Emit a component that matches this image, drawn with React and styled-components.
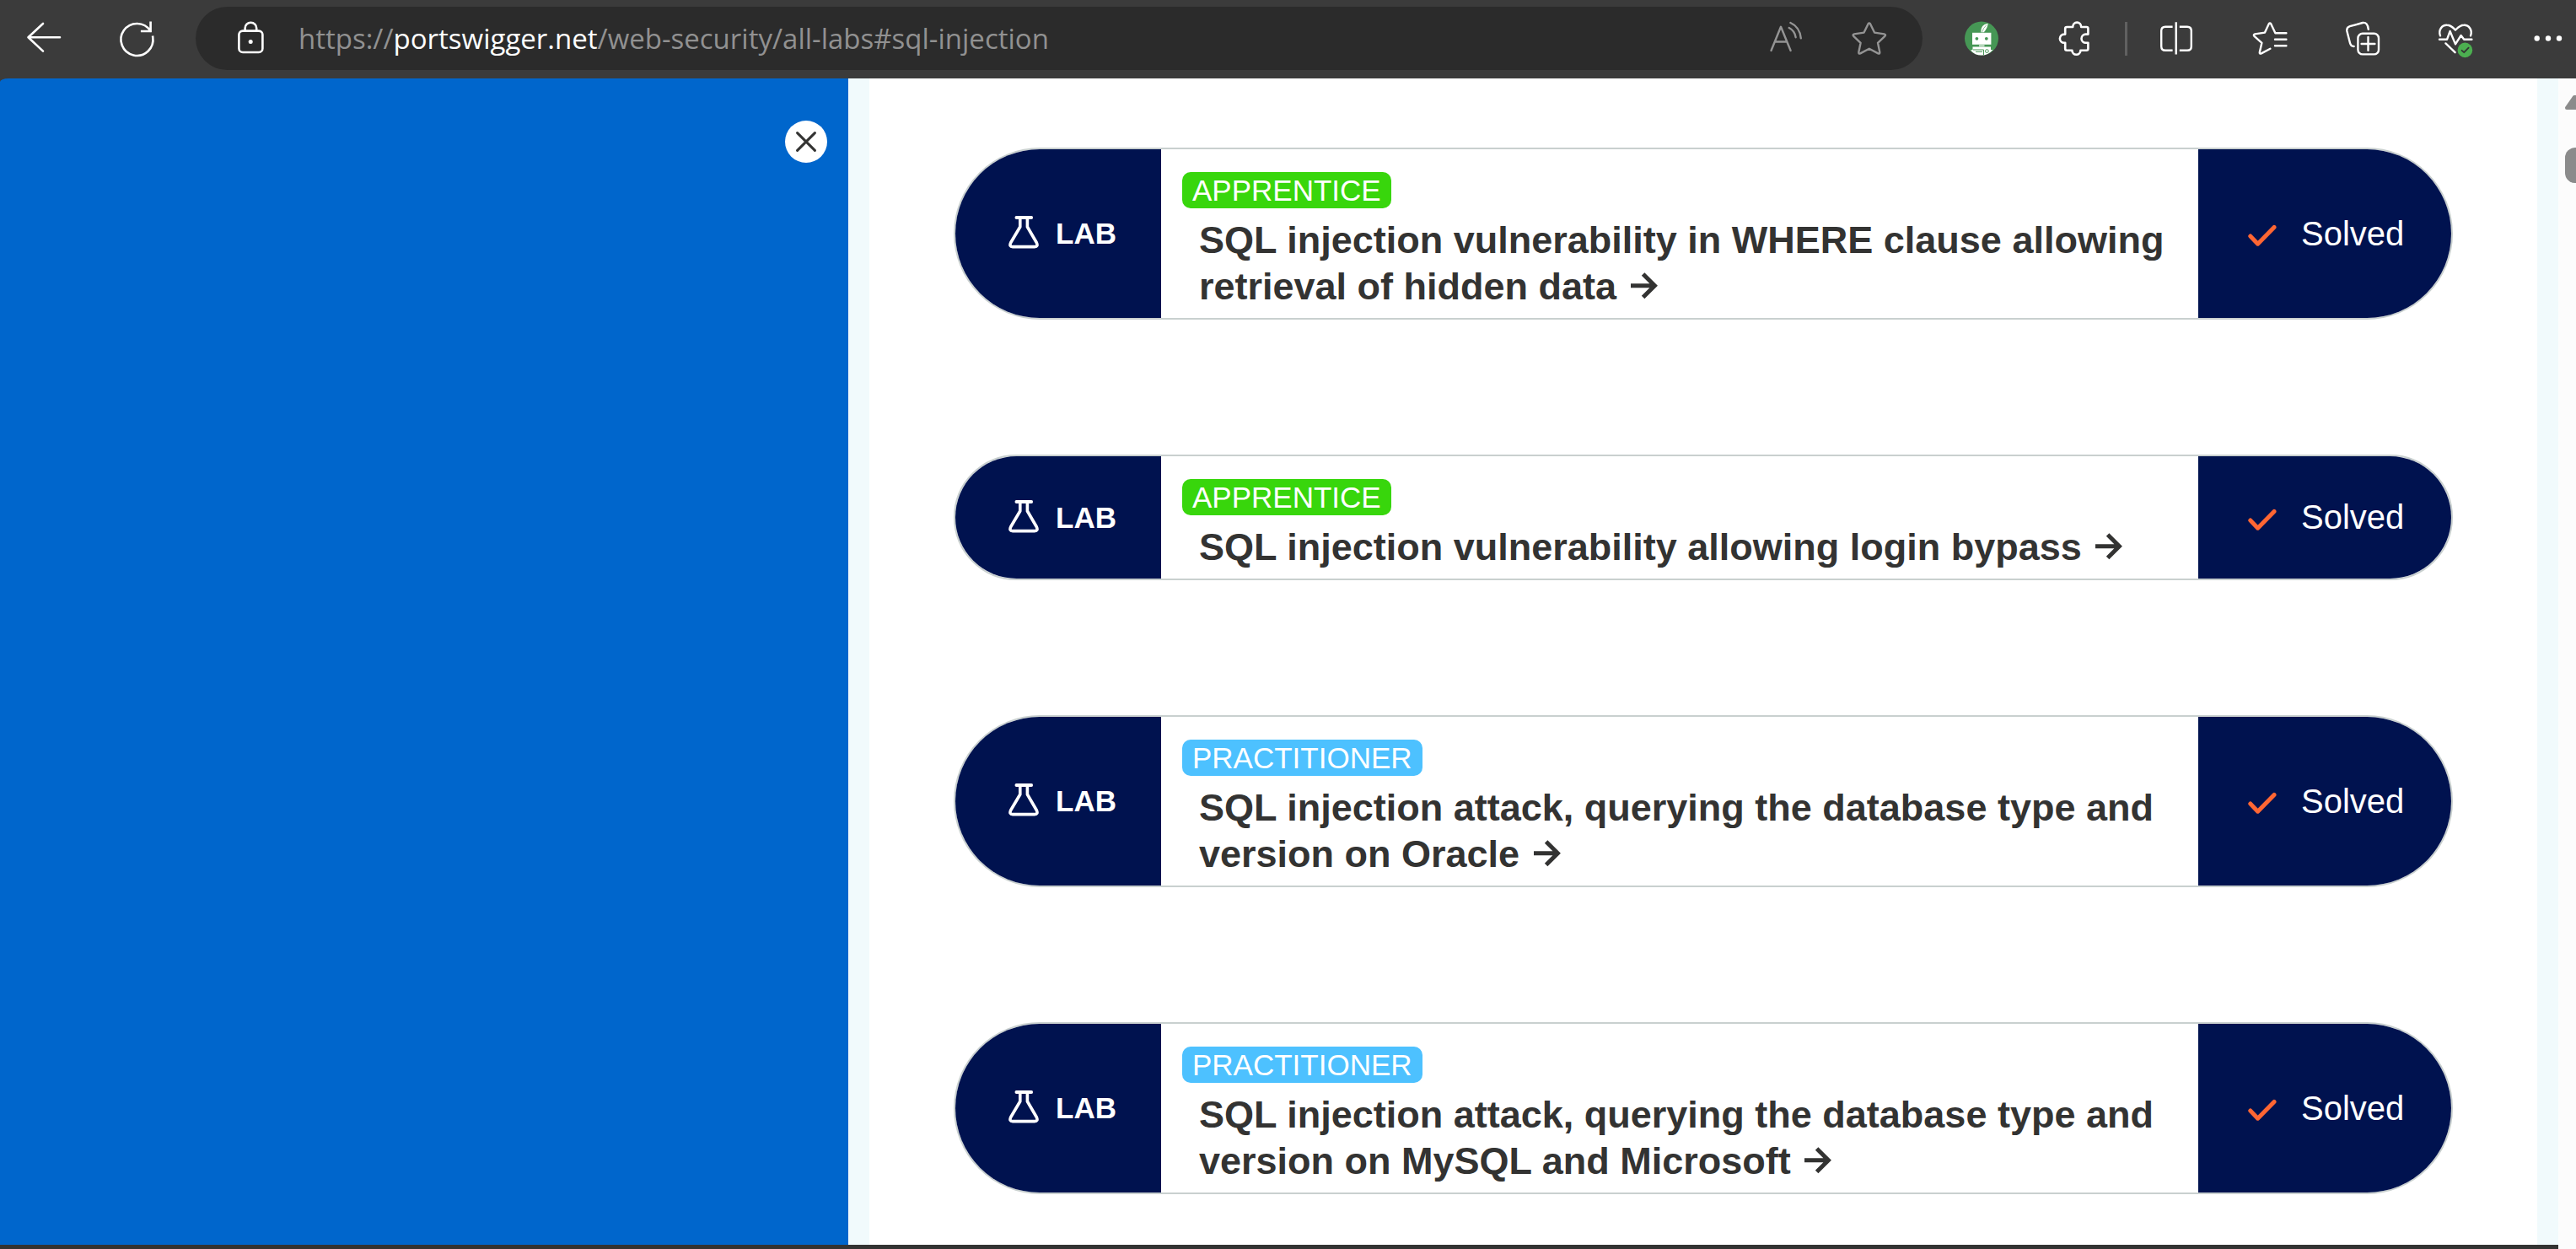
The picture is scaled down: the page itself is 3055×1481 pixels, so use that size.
import React from "react";
import styled, { createGlobalStyle } from "styled-components";

const GlobalStyle = createGlobalStyle`
  *, *::before, *::after { box-sizing: border-box; }
  body { margin: 0; background: #3b3b3b; font-family: "Liberation Sans", Arial, sans-serif; }
  button { border: 0; padding: 0; background: none; color: inherit; font: inherit; }
`;

const Page = styled.div`
  display: flex;
  flex-direction: column;
  height: 100vh;
  overflow: hidden;
`;

/* ---------- browser toolbar ---------- */

const Toolbar = styled.header`
  display: flex;
  align-items: center;
  flex: none;
  height: 93px;
  padding: 8px 12px 9px 31px;
  color: #fff;
  background: #3b3b3b;
`;

const ToolGroup = styled.div`
  display: flex;
  align-items: center;
  gap: ${(p) => p.$gap}px;
`;

const IconButton = styled.button`
  display: block;
  flex: none;
  width: 42px;
  height: 42px;
  svg { display: block; overflow: visible; }
`;

const AddressBar = styled.div`
  display: flex;
  align-items: center;
  align-self: flex-start;
  flex: 1;
  min-width: 0;
  height: 75px;
  margin: 0 49px;
  padding: 0 42px 0 44px;
  border-radius: 38px;
  background: #2b2b2b;
`;

const Address = styled.div`
  flex: 1;
  min-width: 0;
  margin-left: 36px;
  color: #919191;
  font: 33px/48px "Open Sans", "Noto Sans", sans-serif;
  white-space: nowrap;
  overflow: hidden;
`;

const Host = styled.span`
  color: #fff;
`;

const Muted = styled(ToolGroup)`
  color: #949494;
`;

const Divider = styled.span`
  width: 3px;
  height: 40px;
  margin: 0 38px 0 39px;
  background: #606060;
`;

/* ---------- page body ---------- */

const Viewport = styled.div`
  display: flex;
  flex: 1;
  min-height: 0;
`;

const Document = styled.div`
  display: flex;
  flex-direction: column;
  flex: 1;
  min-width: 0;
  overflow: hidden;
`;

const Columns = styled.div`
  display: flex;
  flex: 1;
  min-height: 0;
  overflow: hidden;
`;

const Sidebar = styled.aside`
  flex: 0 0 1006px;
  display: flex;
  justify-content: flex-end;
  align-items: flex-start;
  padding: 50px 25px;
  border-top-left-radius: 10px 4px;
  background: #0066cc;
`;

const CloseButton = styled.button`
  display: grid;
  place-items: center;
  width: 50px;
  height: 50px;
  border-radius: 50%;
  background: #fff;
  color: #333332;
`;

const Backdrop = styled.div`
  flex: 1;
  min-width: 0;
  padding: 0 25px;
  background: #f1fafc;
`;

const LabList = styled.main`
  display: flex;
  flex-direction: column;
  gap: 160px;
  min-height: 100%;
  padding: 82px 100px 60px;
  background: #fff;
`;

const FooterEdge = styled.footer`
  flex: none;
  height: 5px;
  background: #333332;
`;

const Scrollbar = styled.div`
  flex: 0 0 21px;
  display: flex;
  flex-direction: column;
  align-items: flex-start;
  gap: 45px;
  padding: 20px 0 0 8px;
  overflow: hidden;
  background: #fcfcfc;
  svg { display: block; flex: none; }
`;

const Thumb = styled.div`
  flex: none;
  width: 24px;
  height: 42px;
  border-radius: 12px;
  background: #8b8b8b;
`;

/* ---------- lab card ---------- */

const Card = styled.article`
  display: grid;
  grid-template-columns: 244px 1fr 300px;
  overflow: hidden;
  border: 2px solid #c9d0cf;
  border-radius: 102px;
  background: #fff;
`;

const KindPanel = styled.div`
  display: flex;
  align-items: center;
  gap: 20px;
  padding-left: 63px;
  color: #fff;
  background: #00124f;
  font-size: 35px;
  font-weight: 700;
`;

const StatusPanel = styled.div`
  display: flex;
  align-items: center;
  gap: 29px;
  padding-left: 59px;
  color: #fff;
  background: #00124f;
  font-size: 40px;
`;

const Summary = styled.div`
  display: flex;
  flex-direction: column;
  align-items: flex-start;
  gap: 10px;
  padding: 27px 25px 10px;
`;

const Level = styled.span`
  padding: 0 12px;
  border-radius: 10px;
  color: #fff;
  background: ${(p) => (p.$level === "APPRENTICE" ? "#38d60c" : "#4dc1ff")};
  font-size: 35px;
  line-height: 43px;
`;

const TitleLink = styled.a`
  padding-left: 20px;
  color: #333332;
  font-size: 45px;
  font-weight: 700;
  line-height: 55px;
  text-decoration: none;
  svg { display: inline-block; margin-left: 4px; }
`;

/* ---------- icons ---------- */

const Icon = ({ children, width = 3 }) => (
  <svg width="42" height="42" viewBox="0 0 42 42" fill="none" stroke="currentColor"
    strokeWidth={width} strokeLinecap="round" strokeLinejoin="round" aria-hidden="true">
    {children}
  </svg>
);

const BackIcon = () => (
  <Icon width={2.6}><path d="M2.5 19.2H40M20 3 2.5 19.2 20 35.6" /></Icon>
);

const ReloadIcon = () => (
  <Icon width={2.6}>
    <path d="M40.2 18.8A19 19 0 1 1 37.4 11.6M37.6 1.8V12H27.2" strokeLinecap="square" strokeLinejoin="miter" />
  </Icon>
);

const LockIcon = () => (
  <Icon width={2.6}>
    <rect x="7.4" y="11.6" width="28" height="25.4" rx="4.5" />
    <path d="M14.6 11.6V8.5a6.8 6.8 0 0 1 13.6 0v3.1" />
    <circle cx="21.2" cy="24.4" r="2.5" fill="currentColor" stroke="none" />
  </Icon>
);

const ReadAloudIcon = () => (
  <Icon width={2.4}>
    <path d="M2.5 35 14 6.8 25.6 35M7 24.5H21M23.7 8Q30.5 11.5 31.6 19.2M25.4 2Q36.5 7 37.8 20.4" />
  </Icon>
);

const StarIcon = () => (
  <Icon width={2.4}>
    <path d="M19.6 3.2Q20.8 1.6 22 3.2L27 13.6 38.6 15.4Q41 16 39.4 17.8L31 25.8 33.3 37Q33.4 39.2 31.4 38.4L20.8 32.8 10.2 38.4Q8.2 39.2 8.3 37L10.6 25.8 2.2 17.8Q.6 16 3 15.4L14.6 13.6Z" />
  </Icon>
);

const RobotIcon = () => (
  <svg width="42" height="42" viewBox="0 0 42 42" aria-hidden="true">
    <circle cx="21" cy="20.6" r="20" fill="#469755" />
    <path d="M20.3 13.2Q19.4 4.5 28.6 2.8 28.4 8 23.8 13.2Z" fill="#fff" />
    <path d="M21.6 13Q23 8 27 4.6" stroke="#469755" strokeWidth=".6" fill="none" />
    <path d="M10 13.8H32.4V27.8H10Z" fill="#fff" />
    <circle cx="15.4" cy="20.8" r="1.9" fill="#469755" />
    <circle cx="26.8" cy="20.8" r="1.9" fill="#469755" />
    <path d="M18 27.8H24.5V30.5H18Z" fill="#b5d6bb" />
    <path d="M10.5 30.6H32V34H34.5Q29 40.6 21 40.6T8 34.4L10.5 34Z" fill="#fff" />
    <path d="M11 34H23.5V40M14 36.4H22" stroke="#469755" strokeWidth="1" fill="none" />
    <circle cx="27.4" cy="35.6" r="1.9" stroke="#469755" strokeWidth="1" fill="none" />
  </svg>
);

const PuzzleIcon = () => (
  <Icon width={2.6}>
    <path d="M10.2 9Q10.2 7 12.2 7H19.2A5 5.4 0 0 1 29.2 7H35.6Q37.4 7 37.4 8.8V15.6H34.6A5 5 0 0 0 34.6 25.8H37.4V32.8Q37.4 34.8 35.4 34.8H28.4A5 5 0 0 1 18.4 34.8H12.2Q10.2 34.8 10.2 32.8V25.8H9A5 5 0 0 1 9 15.6H10.2Z" />
  </Icon>
);

const SplitIcon = () => (
  <Icon width={2.4}>
    <path d="M19.7 1.2V39.6M15.6 6.7H7Q2.2 6.7 2.2 11.5V30Q2.2 34.8 7 34.8H15.6M23.8 6.7H33Q37.8 6.7 37.8 11.5V30Q37.8 34.8 33 34.8H23.8" strokeLinecap="butt" />
  </Icon>
);

const FavoritesIcon = () => (
  <Icon width={2.4}>
    <path d="M40.4 14.3H27.4L22.2 3.2Q21 1.6 19.8 3.2L15 13.6 3.2 15.4Q1 16 2.4 17.8L11.4 25.8 8.8 37Q8.6 39.2 10.8 38.4L21.4 32.8M27 21.8H40.4M27 29.3H40.4" />
  </Icon>
);

const CollectionsIcon = () => (
  <Icon width={2.4}>
    <rect x="15.4" y="14.8" width="24.6" height="24.6" rx="5.5" />
    <path d="M19.6 27H35.4M27.5 19V34.8M27.8 9.8Q27 1 21 2L5.8 6.2Q1.6 7.6 2.4 12L6 26Q7 30 10.6 30" />
  </Icon>
);

const EssentialsIcon = () => (
  <Icon width={2.4}>
    <path d="M3 17.4C.4 10.6 5 4.6 11 4.8 15.6 4.8 18 7.6 21 10.6 24 7.6 26.6 4.8 31 4.8 37 4.6 41.6 10.6 39 17.4M2 21.8H11L14.6 12 21 27.4 27.6 17 31.2 21.8H40.4M9.4 26.4 20.6 37.2" />
    <circle cx="32.4" cy="34.4" r="8.8" fill="#4caf50" stroke="none" />
    <path d="M28.6 34.8 31.2 37.2 36.6 31.6" stroke="#333" strokeWidth="1.8" />
  </Icon>
);

const MoreIcon = () => (
  <Icon>
    {[7.7, 21, 34].map((x) => (
      <circle key={x} cx={x} cy="20.5" r="3.2" fill="currentColor" stroke="none" />
    ))}
  </Icon>
);

const CloseIcon = () => (
  <svg width="24" height="24" viewBox="0 0 24 24" fill="none" stroke="currentColor" strokeWidth="3" strokeLinecap="round" aria-hidden="true">
    <path d="M1.6 1.6 22.4 22.4M22.4 1.6 1.6 22.4" />
  </svg>
);

const FlaskIcon = () => (
  <svg width="36" height="42" viewBox="0 0 36 42" fill="none" stroke="#fff" strokeLinejoin="round" strokeLinecap="round" aria-hidden="true">
    <path d="M9.4 2H27.2" strokeWidth="3.8" />
    <path d="M13.8 3V13L2.8 31.5Q.4 36.6 5 36.6H31Q35.6 36.6 33.2 31.5L22.4 13V3" strokeWidth="3.6" />
  </svg>
);

const CheckIcon = () => (
  <svg width="34" height="30" viewBox="0 0 34 30" fill="none" stroke="#ff6633" strokeWidth="5" strokeLinecap="round" strokeLinejoin="round" aria-hidden="true">
    <path d="M2.8 18 11.6 27.2 31 7.4" />
  </svg>
);

const ArrowIcon = () => (
  <svg width="32" height="32" viewBox="0 0 32 32" fill="none" stroke="currentColor" strokeWidth="5" aria-hidden="true">
    <path d="M0 15.8H28M14.6 2 28.4 15.8 14.6 29.6" />
  </svg>
);

const labs = [
  { level: "APPRENTICE", title: "SQL injection vulnerability in WHERE clause allowing retrieval of hidden data" },
  { level: "APPRENTICE", title: "SQL injection vulnerability allowing login bypass" },
  { level: "PRACTITIONER", title: "SQL injection attack, querying the database type and version on Oracle" },
  { level: "PRACTITIONER", title: "SQL injection attack, querying the database type and version on MySQL and Microsoft" },
];

const Tool = ({ label, icon: Glyph }) => (
  <IconButton type="button" aria-label={label}><Glyph /></IconButton>
);

const LabCard = ({ level, title }) => (
  <Card>
    <KindPanel><FlaskIcon />LAB</KindPanel>
    <Summary>
      <Level $level={level}>{level}</Level>
      <TitleLink href="#sql-injection">{title} <ArrowIcon /></TitleLink>
    </Summary>
    <StatusPanel><CheckIcon />Solved</StatusPanel>
  </Card>
);

export default function App() {
  return (
    <Page>
      <GlobalStyle />
      <Toolbar>
        <ToolGroup $gap={68}>
          <Tool label="Back" icon={BackIcon} />
          <Tool label="Refresh" icon={ReloadIcon} />
        </ToolGroup>
        <AddressBar>
          <Tool label="View site information" icon={LockIcon} />
          <Address role="textbox" aria-label="Address bar" contentEditable suppressContentEditableWarning spellCheck={false}>
            https://<Host>portswigger.net</Host>/web-security/all-labs#sql-injection
          </Address>
          <Muted $gap={56}>
            <Tool label="Read aloud" icon={ReadAloudIcon} />
            <Tool label="Add to favorites" icon={StarIcon} />
          </Muted>
        </AddressBar>
        <ToolGroup $gap={68}>
          <Tool label="Extension" icon={RobotIcon} />
          <Tool label="Extensions" icon={PuzzleIcon} />
        </ToolGroup>
        <Divider />
        <ToolGroup $gap={68}>
          <Tool label="Split screen" icon={SplitIcon} />
          <Tool label="Favorites" icon={FavoritesIcon} />
          <Tool label="Collections" icon={CollectionsIcon} />
          <Tool label="Browser essentials" icon={EssentialsIcon} />
          <Tool label="Settings and more" icon={MoreIcon} />
        </ToolGroup>
      </Toolbar>
      <Viewport>
        <Document>
          <Columns>
            <Sidebar>
              <CloseButton type="button" aria-label="Close menu"><CloseIcon /></CloseButton>
            </Sidebar>
            <Backdrop>
              <LabList>
                {labs.map((lab) => <LabCard key={lab.title} {...lab} />)}
              </LabList>
            </Backdrop>
          </Columns>
          <FooterEdge />
        </Document>
        <Scrollbar>
          <svg width="26" height="17" viewBox="0 0 26 17" aria-hidden="true">
            <path d="M2 15 11 2H15L24 15Z" fill="#8b8b8b" stroke="#8b8b8b" strokeWidth="4" strokeLinejoin="round" />
          </svg>
          <Thumb />
        </Scrollbar>
      </Viewport>
    </Page>
  );
}
